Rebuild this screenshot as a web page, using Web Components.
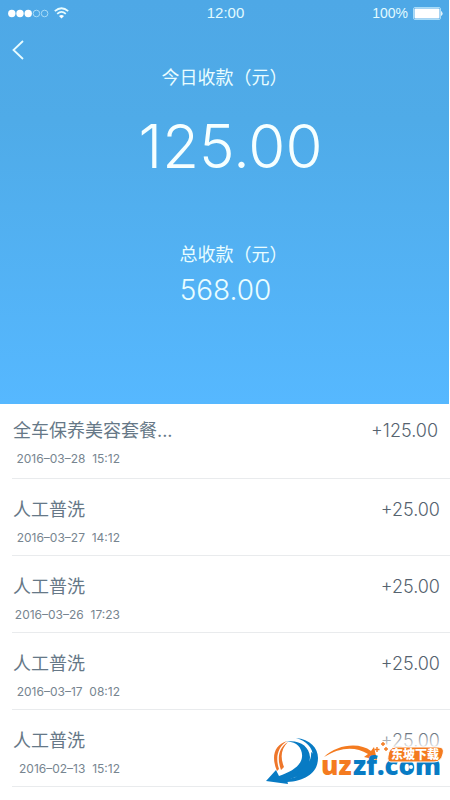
<!DOCTYPE html>
<html lang="zh-CN">
<head>
<meta charset="utf-8">
<meta name="viewport" content="width=device-width, initial-scale=1">
<title>今日收款</title>
<style>
  html { background: #fff; }
  body { margin: 0; font-family: Inter, "Noto Sans CJK SC", sans-serif; color: #667887; }
</style>
</head>
<body>
<receipts-page></receipts-page>
<script>
const define = (name, html) => {
  const template = document.createElement('template');
  template.innerHTML = html;
  customElements.define(name, class extends HTMLElement {
    constructor() {
      super();
      this.attachShadow({ mode: 'open' }).append(template.content.cloneNode(true));
    }
  });
};

define('status-bar', `
  <style>
    :host { display: grid; grid-template-columns: 1fr auto 1fr; align-items: center; height: 26px; padding: 0 6px 0 8px; font: 15px/26px "Liberation Sans", sans-serif; color: #e2fbff; }
    .left, .right { display: flex; align-items: center; }
    .left { gap: 5px; }
    .right { justify-content: flex-end; gap: 5px; font-size: 14px; }
    svg { display: block; }
  </style>
  <div class="left">
    <svg width="41" height="9" viewBox="0 0 41 9" aria-hidden="true">
      <g fill="#fff"><circle cx="3.8" cy="4.5" r="3.7"/><circle cx="12" cy="4.5" r="3.7"/><circle cx="20.2" cy="4.5" r="3.7"/></g>
      <g fill="none" stroke="#a8dcf8"><circle cx="28.4" cy="4.5" r="3.3"/><circle cx="36.6" cy="4.5" r="3.3"/></g>
    </svg>
    <svg width="15" height="12" viewBox="0 0 15 12" fill="none" stroke="#e8fcff" stroke-width="1.8" aria-hidden="true">
      <path d="M.8 4.2Q7.5-1.8 14.2 4.2M3.2 6.8Q7.5 3 11.8 6.8"/><path d="M5 9.1Q7.5 7 10 9.1L7.5 11.6Z" fill="#fff" stroke="none"/>
    </svg>
  </div>
  <span>12:00</span>
  <div class="right"><span>100%</span>
    <svg width="30" height="13" viewBox="0 0 30 13" aria-hidden="true">
      <rect x=".5" y=".5" width="27" height="12" rx="1.5" fill="none" stroke="#a8dcf8"/><rect x="1.5" y="1.5" width="25" height="10" rx="1" fill="#fff"/><path d="M28.5 4.5Q30 6.5 28.5 8.5Z" fill="#fff" stroke="#fff" stroke-width=".6"/>
    </svg>
  </div>`);

define('nav-back', `
  <style>
    :host { display: block; height: 37px; }
    button { display: flex; align-items: center; height: 48px; padding: 0 12px; border: 0; background: none; cursor: pointer; }
  </style>
  <button type="button" aria-label="返回"><svg width="12" height="20" viewBox="0 0 12 20" fill="none" stroke="#e8fcff" stroke-width="1.8" aria-hidden="true"><path d="M11 1L1.5 10L11 19"/></svg></button>`);

define('income-summary', `
  <style>
    :host { display: flex; flex-direction: column; align-items: center; padding: 0 0 98px; color: #e9fdff; text-align: center; }
    .label { width: 126px; font: 18px/26px "Noto Sans CJK SC", sans-serif; text-align: right; white-space: nowrap; }
    .today { margin: 25px 0 62px 12px; font-size: 60px; line-height: 64px; font-weight: 300; color: #f6ffff; }
    .total { margin: 8px 0 0 2px; font-size: 28px; line-height: 32px; font-weight: 300; }
  </style>
  <div class="label"><slot name="today-label"></slot></div>
  <div class="today"><slot name="today"></slot></div>
  <div class="label"><slot name="total-label"></slot></div>
  <div class="total"><slot name="total"></slot></div>`);

define('receipt-row', `
  <style>
    :host { display: flex; justify-content: space-between; align-items: flex-start; margin-left: 12px; padding: 17px 10px 7px 1px; border-bottom: 1px solid #e9ebed; }
    :host(:first-of-type) { padding-top: 13px; padding-right: 12px; padding-bottom: 9px; }
    .title { font-size: 18px; line-height: 28px; }
    .date { width: 107px; margin-top: 4px; font-size: 12px; line-height: 20px; text-align: right; white-space: pre; color: #778590; }
    .amount { font-size: 18px; line-height: 28px; font-weight: 300; color: #56636f; }
  </style>
  <div><div class="title"><slot></slot></div><div class="date"><slot name="date"></slot></div></div>
  <div class="amount"><slot name="amount"></slot></div>`);

define('site-mark', `
  <style>
    :host { position: absolute; right: 5px; bottom: 15px; width: 180px; pointer-events: none; }
    svg { display: block; overflow: visible; }
    text { font-family: "Open Sans", sans-serif; font-weight: 800; font-size: 26px; }
    .badge { font-family: "Noto Sans CJK SC", sans-serif; font-size: 12px; font-weight: 900; }
  </style>
  <svg width="180" height="50" viewBox="265 735 180 50">
    <defs><linearGradient id="fade" x1="0" y1="0" x2="0" y2="1"><stop stop-color="#fff" stop-opacity="0"/><stop offset="1" stop-color="#fff" stop-opacity=".9"/></linearGradient></defs>
    <rect x="380" y="731" width="64" height="17" fill="url(#fade)"/>
    <path d="M287 741C274 745 271 757 277 771L279 769C275 757 278 747 287 741Z" fill="#ee762a"/>
    <path d="M288 742C278 748 277 759 281 770L284 767C280 757 281 749 288 742Z" fill="#ee762a"/>
    <path d="M284 742C296 740 303 748 302 757C301 766 291 772 279 776L276 770L266 781L288 784L287 780C301 777 310 768 310 757C309 746 299 739 284 742Z" fill="#087bc4"/>
    <path d="M296 738C310 739 318 748 318 758C318 773 305 781 287 782L287 779C302 777 313 769 313 757C313 747 306 741 296 738Z" fill="#087bc4"/>
    <path d="M299 770C308 766 312 759 311 752L316 756C316 768 308 776 295 779Z" fill="#087bc4"/>
    <path d="M324 757C337 744 360 742 371 751L374 747L377 760L364 757L368 754C355 746 340 747 324 757Z" fill="#f47b20"/>
    <text x="321" y="775" fill="#f47b20">uz</text>
    <text x="353" y="775" fill="#087bc4">zf.com</text>
    <path d="M396 747H438Q445 747 443 754Q441 762 434 762H391Q387 762 388 756Q389 747 396 747Z" fill="#f47b20" stroke="#fff"/>
    <text class="badge" x="391" y="759" fill="#fff">东坡下载</text>
    <path d="M377 747V752M374.500 749.500H379.500M383 742V746M381 744H385M386 747V751M384 749H388" stroke="#f47b20" stroke-width="1.4"/>
    <circle cx="411" cy="767" r="2" fill="#fff"/>
  </svg>`);

define('receipts-page', `
  <style>
    :host { display: block; position: relative; padding-bottom: 13px; }
    header { margin-right: 1px; background: linear-gradient(#4ea8e6 0%, #4fabe8 30%, #56b8ff 100%); }
    main { display: block; }
  </style>
  <header>
    <status-bar></status-bar>
    <nav-back></nav-back>
    <income-summary>
      <span slot="today-label">今日收款（元）</span><span slot="today">125.00</span>
      <span slot="total-label">总收款（元）</span><span slot="total">568.00</span>
    </income-summary>
  </header>
  <main>
    <receipt-row>全车保养美容套餐...<span slot="date">2016–03–28  15:12</span><span slot="amount">+125.00</span></receipt-row>
    <receipt-row>人工普洗<span slot="date">2016–03–27  14:12</span><span slot="amount">+25.00</span></receipt-row>
    <receipt-row>人工普洗<span slot="date">2016–03–26  17:23</span><span slot="amount">+25.00</span></receipt-row>
    <receipt-row>人工普洗<span slot="date">2016–03–17  08:12</span><span slot="amount">+25.00</span></receipt-row>
    <receipt-row>人工普洗<span slot="date">2016–02–13  15:12</span><span slot="amount">+25.00</span></receipt-row>
  </main>
  <site-mark></site-mark>`);
</script>
</body>
</html>
